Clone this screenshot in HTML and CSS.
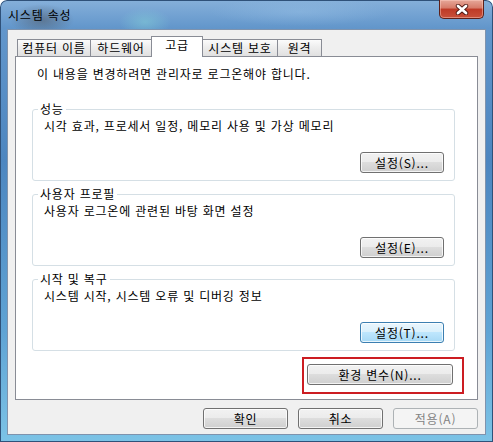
FILE: index.html
```html
<!DOCTYPE html>
<html lang="ko">
<head>
  <meta charset="UTF-8">
  <meta name="viewport" content="width=device-width, initial-scale=1.0">
  <title>시스템 속성</title>
  <link rel="stylesheet" href="styles.css">
</head>
<body>
  <div class="window">
    <div class="titlebar">
      <span class="title">시스템 속성</span>
      <button class="close" aria-label="닫기">
        <svg width="14" height="11" viewBox="0 0 14 11">
          <path d="M3 2 L11 9 M11 2 L3 9" stroke="#4a1510" stroke-width="4.4" stroke-linecap="round"/>
          <path d="M3 2 L11 9 M11 2 L3 9" stroke="#fff" stroke-width="2.8" stroke-linecap="round"/>
        </svg>
      </button>
    </div>

    <div class="client">
      <div class="tabs">
        <div class="tab">컴퓨터 이름</div>
        <div class="tab">하드웨어</div>
        <div class="tab active">고급</div>
        <div class="tab">시스템 보호</div>
        <div class="tab">원격</div>
      </div>

      <div class="panel">
        <p class="intro">이 내용을 변경하려면 관리자로 로그온해야 합니다.</p>

        <div class="group">
          <div class="group-title">성능</div>
          <p class="group-text">시각 효과, 프로세서 일정, 메모리 사용 및 가상 메모리</p>
          <button class="btn">설정(S)...</button>
        </div>

        <div class="group">
          <div class="group-title">사용자 프로필</div>
          <p class="group-text">사용자 로그온에 관련된 바탕 화면 설정</p>
          <button class="btn">설정(E)...</button>
        </div>

        <div class="group">
          <div class="group-title">시작 및 복구</div>
          <p class="group-text">시스템 시작, 시스템 오류 및 디버깅 정보</p>
          <button class="btn btn-hot">설정(T)...</button>
        </div>

        <div class="highlight">
          <button class="btn btn-wide">환경 변수(N)...</button>
        </div>
      </div>

      <div class="actions">
        <button class="btn">확인</button>
        <button class="btn">취소</button>
        <button class="btn" disabled>적용(A)</button>
      </div>
    </div>
  </div>
</body>
</html>
```

FILE: styles.css
```css
body {
  margin: 0;
  font-family: "Noto Sans CJK KR", "Noto Sans", sans-serif;
  font-size: 12px;
  letter-spacing: 0.8px;
  color: #000;
}
.window {
  width: 493px;
  height: 442px;
  box-sizing: border-box;
  padding: 0 7px 7px;
  display: flex;
  flex-direction: column;
  border-radius: 7px 7px 0 0;
  box-shadow: inset 0 0 0 1px #2f5179;
  background:
    radial-gradient(ellipse 32px 16px at 42px 20px, rgba(80, 88, 100, 0.55), transparent),
    radial-gradient(ellipse 26px 14px at 145px 22px, rgba(130, 205, 215, 0.55), transparent),
    radial-gradient(ellipse 90px 14px at 300px 12px, rgba(160, 200, 235, 0.35), transparent),
    linear-gradient(180deg, #86b0da 0, #6296cb 28px, #4d86c0 160px, #5fa3d4 330px, #7cc3e6 442px);
}
.titlebar {
  height: 29px;
  display: flex;
  align-items: flex-start;
  justify-content: space-between;
}
.title {
  margin: 8px 0 0 1px;
  line-height: 14px;
}
.close {
  width: 45px;
  height: 19px;
  margin-right: 2px;
  padding: 0;
  display: flex;
  align-items: center;
  justify-content: center;
  border: 1px solid #5e2019;
  border-top: none;
  border-radius: 0 0 5px 5px;
  background: linear-gradient(#e6a899 0%, #d67a68 45%, #be3a26 50%, #c8503a 100%);
  box-shadow: inset 0 0 0 1px rgba(255, 210, 200, 0.45);
}
.client {
  flex: 1;
  display: flex;
  flex-direction: column;
  padding: 6px 7px 5px;
  background: #f0f0f0;
  border: 1px solid #7f93ad;
}
.tabs {
  display: flex;
  align-items: flex-end;
  height: 20px;
  padding-left: 2px;
}
.tab {
  height: 17px;
  box-sizing: border-box;
  margin-right: -1px;
  border: 1px solid #898c95;
  border-bottom: none;
  line-height: 16px;
  text-align: center;
  white-space: nowrap;
  background: linear-gradient(#fbfbfb, #ececec 50%, #e0e0e0);
}
.tab:nth-child(1) { width: 74px; }
.tab:nth-child(2) { width: 62px; }
.tab:nth-child(3) { width: 52px; }
.tab:nth-child(4) { width: 76px; }
.tab:nth-child(5) { width: 45px; }
.tab.active {
  height: 21px;
  margin-bottom: -1px;
  line-height: 15px;
  background: #fff;
  position: relative;
  z-index: 1;
}
.panel {
  height: 344px;
  box-sizing: border-box;
  display: flex;
  flex-direction: column;
  padding: 10px 22px 0 16px;
  background: #fff;
  border: 1px solid #898c95;
}
.intro {
  margin: 0 0 0 5px;
  line-height: 14px;
}
.group {
  display: flex;
  flex-direction: column;
  margin-top: 28px;
  padding: 0 10px 7px 0;
  border: 1px solid #d5dfe5;
  border-radius: 3px;
}
.group + .group {
  margin-top: 13px;
}
.group-title {
  align-self: flex-start;
  margin: -8px 0 0 5px;
  padding: 0 2px;
  line-height: 14px;
  background: #fff;
}
.group-text {
  margin: 3px 0 0 11px;
  line-height: 14px;
}
.group .btn {
  align-self: flex-end;
  margin-top: 19px;
}
.btn {
  width: 84px;
  height: 21px;
  box-sizing: border-box;
  padding: 0;
  font: inherit;
  letter-spacing: inherit;
  color: #000;
  border: 1px solid #707070;
  border-radius: 3px;
  background: linear-gradient(#f2f2f2 0%, #ebebeb 49%, #dddddd 50%, #cfcfcf 100%);
  box-shadow: inset 0 0 0 1px rgba(255, 255, 255, 0.75);
}
.btn-hot {
  border-color: #3c7fb1;
  background: linear-gradient(#eaf6fd 0%, #d9f0fc 49%, #bee6fd 50%, #a7d9f5 100%);
}
.btn:disabled {
  color: #838383;
  border-color: #adb2b5;
  background: #f4f4f4;
  box-shadow: none;
}
.highlight {
  align-self: flex-end;
  width: 162px;
  height: 37px;
  box-sizing: border-box;
  margin: 6px -9px 0 0;
  padding: 5px 9px 7px 3px;
  border: 2px solid #cc1d22;
}
.btn-wide {
  width: 146px;
}
.actions {
  display: flex;
  justify-content: flex-end;
  gap: 10px;
  margin-top: 8px;
}
.actions .btn {
  width: 85px;
}
```
